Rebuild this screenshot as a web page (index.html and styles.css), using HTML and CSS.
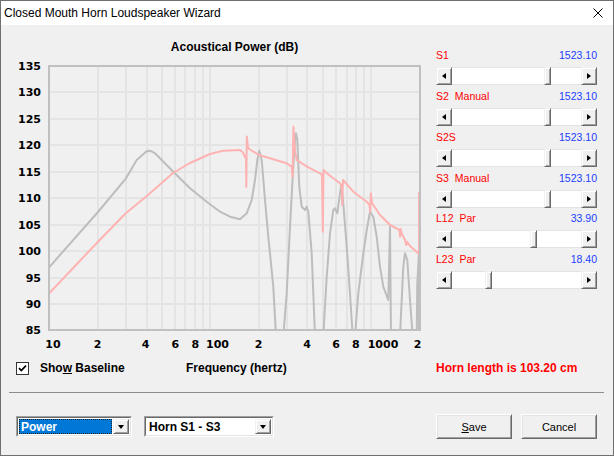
FILE: index.html
```html
<!DOCTYPE html>
<html>
<head>
<meta charset="utf-8">
<title>Closed Mouth Horn Loudspeaker Wizard</title>
<link rel="stylesheet" href="styles.css">
</head>
<body>
<div class="window">
  <div class="titlebar">
    <span class="title">Closed Mouth Horn Loudspeaker Wizard</span>
    <svg class="close" width="10" height="10" viewBox="0 0 10 10"><path d="M0.5 0.5 L9.5 9.5 M9.5 0.5 L0.5 9.5" stroke="#000" stroke-width="1" fill="none"/></svg>
  </div>
  <div class="client">
    <div class="top">
      <svg class="chart" width="429" height="331" viewBox="1 25 429 331">
        <defs><clipPath id="plot"><rect x="49" y="66" width="371" height="264"/></clipPath></defs>
        <text class="ctitle" x="234.5" y="50.5" text-anchor="middle">Acoustical Power (dB)</text>
        <g class="grid">
          <line x1="49" x2="420" y1="92" y2="92"/><line x1="49" x2="420" y1="119" y2="119"/>
          <line x1="49" x2="420" y1="145" y2="145"/><line x1="49" x2="420" y1="172" y2="172"/>
          <line x1="49" x2="420" y1="198" y2="198"/><line x1="49" x2="420" y1="225" y2="225"/>
          <line x1="49" x2="420" y1="251" y2="251"/><line x1="49" x2="420" y1="278" y2="278"/>
          <line x1="49" x2="420" y1="304" y2="304"/>
          <line y1="66" y2="330" x1="98" x2="98"/><line y1="66" y2="330" x1="126" x2="126"/>
          <line y1="66" y2="330" x1="147" x2="147"/><line y1="66" y2="330" x1="162" x2="162"/>
          <line y1="66" y2="330" x1="175" x2="175"/><line y1="66" y2="330" x1="185" x2="185"/>
          <line y1="66" y2="330" x1="195" x2="195"/><line y1="66" y2="330" x1="203" x2="203"/>
          <line y1="66" y2="330" x1="210" x2="210"/><line y1="66" y2="330" x1="259" x2="259"/>
          <line y1="66" y2="330" x1="287" x2="287"/><line y1="66" y2="330" x1="307" x2="307"/>
          <line y1="66" y2="330" x1="323" x2="323"/><line y1="66" y2="330" x1="336" x2="336"/>
          <line y1="66" y2="330" x1="347" x2="347"/><line y1="66" y2="330" x1="356" x2="356"/>
          <line y1="66" y2="330" x1="364" x2="364"/><line y1="66" y2="330" x1="371" x2="371"/>
        </g>
        <g clip-path="url(#plot)">
          <polyline class="base" points="48.5,268 98,212 126,178.3 136.7,160 146,151.7 149,150.7 152,151.5 155,153.3 173.3,171.7 190,188.3 206.7,201.7 220,211.7 230,216.7 240,219.3 246.7,213.3 251.7,200 255,180 257.3,160 259.3,150.7 261.7,160 265,200 268.3,236.7 273.3,286.7 276,336 283.3,336 286.7,293.3 290,226.7 292.7,176.7 295,140 296,133.3 297.3,140 299.3,186.7 301.7,206.7 305,210 306.7,206.7 308.3,211.7 311.7,253.3 315,336 323.3,336 326.7,276.7 330,233.3 333.3,210 335,208.3 337.3,213.3 340,193.3 341.3,185 343.3,203.3 346.7,246.7 350,293.3 352.7,336 355,336 358.3,293.3 363.3,253.3 367.3,226.7 370,211.7 373.3,216.7 376.7,236.7 380,266.7 383.3,286.7 388.3,300 390,226.7 391,336 400,336 403.3,266.7 405,253.3 407.3,260 410,300 412.7,336 416.7,336 417.3,283.3 419,253.3 419,336"/>
          <polyline class="tuned" points="48.5,294 98,241.7 126,213 146,196.7 173,173 190,163 210,154 223,150.7 240,150 243,152.5 245,157 246,158 246.3,187 246.8,136.5 248,147 249,149 259,155 286.7,163.3 291.7,166.7 292.6,176.7 293.4,126.7 294.8,150 296.7,160 307,166.7 320,173.3 322,175 322.8,231.7 323.5,170 325,171.7 333.3,178.3 340,183.3 341.7,186 342.2,205 343,180 344,181 353.3,191.7 366.7,201.7 369.5,205 370.2,211.7 370.8,193.3 372,203 380,215 390,225 399.5,230 400,236.7 400.7,229 401.5,233 405,240 406.2,245 407,241.7 410,246 418.3,253.3 419,253.3 419,191.7"/>
        </g>
        <rect class="frame" x="49" y="66" width="371" height="264"/>
        <g class="ylab">
          <text x="41" y="70">135</text><text x="41" y="96">130</text><text x="41" y="123">125</text>
          <text x="41" y="149">120</text><text x="41" y="176">115</text><text x="41" y="202">110</text>
          <text x="41" y="229">105</text><text x="41" y="255">100</text><text x="41" y="282">95</text>
          <text x="41" y="308">90</text><text x="41" y="334">85</text>
        </g>
        <g class="xlab">
          <text x="53" y="348">10</text><text x="97.7" y="348">2</text><text x="145.5" y="348">4</text>
          <text x="175.3" y="348">6</text><text x="195.3" y="348">8</text><text x="217.5" y="348">100</text>
          <text x="258.7" y="348">2</text><text x="307" y="348">4</text><text x="336" y="348">6</text>
          <text x="355.8" y="348">8</text><text x="383" y="348">1000</text><text x="417.5" y="348">2</text>
        </g>
      </svg>
      <div class="panel">
        <div class="slider">
          <div class="srow"><span class="name">S1</span><span class="val">1523.10</span></div>
          <div class="sb"><div class="arrow l"></div><div class="track" style="width:92px"></div><div class="thumb"></div><div class="track rest"></div><div class="arrow r"></div></div>
        </div>
        <div class="slider">
          <div class="srow"><span class="name">S2</span><span class="mode">Manual</span><span class="val">1523.10</span></div>
          <div class="sb"><div class="arrow l"></div><div class="track" style="width:92px"></div><div class="thumb"></div><div class="track rest"></div><div class="arrow r"></div></div>
        </div>
        <div class="slider">
          <div class="srow"><span class="name">S2S</span><span class="val">1523.10</span></div>
          <div class="sb"><div class="arrow l"></div><div class="track" style="width:92px"></div><div class="thumb"></div><div class="track rest"></div><div class="arrow r"></div></div>
        </div>
        <div class="slider">
          <div class="srow"><span class="name">S3</span><span class="mode">Manual</span><span class="val">1523.10</span></div>
          <div class="sb"><div class="arrow l"></div><div class="track" style="width:92px"></div><div class="thumb"></div><div class="track rest"></div><div class="arrow r"></div></div>
        </div>
        <div class="slider">
          <div class="srow"><span class="name">L12</span><span class="mode">Par</span><span class="val">33.90</span></div>
          <div class="sb"><div class="arrow l"></div><div class="track" style="width:78px"></div><div class="thumb"></div><div class="track rest"></div><div class="arrow r"></div></div>
        </div>
        <div class="slider">
          <div class="srow"><span class="name">L23</span><span class="mode">Par</span><span class="val">18.40</span></div>
          <div class="sb"><div class="arrow l"></div><div class="track" style="width:33px"></div><div class="thumb"></div><div class="track rest"></div><div class="arrow r"></div></div>
        </div>
      </div>
    </div>
    <div class="options">
      <div class="baseline">
        <svg class="cb" width="13" height="13" viewBox="0 0 13 13"><rect x="0.5" y="0.5" width="12" height="12" fill="#fff" stroke="#333"/><path d="M3 6.2 L5.3 8.6 L10 3.6" fill="none" stroke="#000" stroke-width="1.7"/></svg>
        <span>Sho<u>w</u> Baseline</span>
      </div>
      <div class="freq">Frequency (hertz)</div>
      <div class="horn">Horn length is 103.20 cm</div>
    </div>
    <div class="sep"></div>
    <div class="bottom">
      <div class="combo power">
        <div class="combo-in">
          <div class="sel"><span>Power</span></div>
          <div class="dd"></div>
        </div>
      </div>
      <div class="combo horncombo">
        <div class="combo-in">
          <div class="plain">Horn S1 - S3</div>
          <div class="dd"></div>
        </div>
      </div>
      <div class="btn save"><span><u>S</u>ave</span></div>
      <div class="btn cancel"><span>Cancel</span></div>
    </div>
  </div>
</div>
</body>
</html>
```
FILE: styles.css
```css
* { box-sizing: border-box; }
html, body { margin: 0; padding: 0; }
body {
  width: 614px; height: 456px; overflow: hidden;
  background: #f0f0f0;
  font-family: "Liberation Sans", Arial, sans-serif;
}
.window {
  width: 614px; height: 456px;
  border: 1px solid #6f6f6f;
  display: flex; flex-direction: column;
  background: #f0f0f0;
}
.titlebar {
  flex: none; height: 24px; background: #fff;
  display: flex; align-items: center; justify-content: space-between;
  padding: 0 10px 0 3px;
}
.title { font-size: 12px; color: #000; }
.close { display: block; }
.client { flex: 1; display: flex; flex-direction: column; }
.top { flex: none; height: 331px; display: flex; }
.chart { display: block; flex: none; }
.ctitle { font-family: "Liberation Sans", Arial, sans-serif; font-weight: bold; font-size: 12px; fill: #000; }
.grid line { stroke: #e4e4e4; stroke-width: 2; }
.frame { fill: none; stroke: #c0c0c0; stroke-width: 2; }
.base { fill: none; stroke: #bdbdbd; stroke-width: 2; stroke-linejoin: round; }
.tuned { fill: none; stroke: #ffb2b2; stroke-width: 2; stroke-linejoin: round; }
.ylab text { font-family: "DejaVu Sans", sans-serif; font-weight: bold; font-size: 11px; fill: #000; text-anchor: end; }
.xlab text { font-family: "DejaVu Sans", sans-serif; font-weight: bold; font-size: 11px; fill: #000; text-anchor: middle; }

.panel { flex: none; width: 161px; margin-left: 6px; padding-top: 24px; }
.slider { margin-bottom: 4.85px; }
.srow { display: flex; height: 13px; line-height: 13px; font-size: 10.5px; margin-bottom: 5px; white-space: nowrap; }
.name, .mode { color: #ff0000; }
.mode { margin-left: 6px; }
.val { margin-left: auto; color: #2040ff; }
.sb { display: flex; height: 18px; background: #fff; }
.track { flex: none; height: 18px; border-top: 1px solid #e3e3e3; border-bottom: 1px solid #e3e3e3; background: #fff; }
.track.rest { flex: 1; }
.arrow, .thumb {
  flex: none; height: 18px; background: #f0f0f0;
  border: 1px solid; border-color: #f0f0f0 #696969 #696969 #f0f0f0;
  box-shadow: inset 1px 1px #fff, inset -1px -1px #a0a0a0;
  display: flex; align-items: center; justify-content: center;
}
.arrow { width: 16px; }
.thumb { width: 7px; }
.arrow::before { content: ""; display: block; border-style: solid; }
.arrow.l::before { border-width: 3.5px 4px 3.5px 0; border-color: transparent #000 transparent transparent; }
.arrow.r::before { border-width: 3.5px 0 3.5px 4px; border-color: transparent transparent transparent #000; }

.options {
  flex: none; display: flex; align-items: center;
  height: 16px; margin-top: 4px;
  font-size: 12px; font-weight: bold; line-height: 16px; color: #000;
  white-space: nowrap;
}
.baseline { width: 185px; padding-left: 15px; display: flex; align-items: center; }
.cb { display: block; margin-right: 11px; flex: none; }
.freq { width: 250px; }
.horn { color: #ff0000; }

.sep { flex: none; height: 1px; background: #8c8c8c; margin: 16px 9px 0 8px; }

.bottom { flex: none; display: flex; align-items: flex-start; margin-top: 21px; padding: 0 16px 0 15px; }
.combo {
  margin-top: 2px; height: 21px;
  border: 1px solid; border-color: #a0a0a0 #fff #fff #a0a0a0;
}
.combo-in {
  height: 100%; display: flex; background: #fff; padding: 1px;
  border: 1px solid; border-color: #696969 #e3e3e3 #e3e3e3 #696969;
  font-size: 12px; font-weight: bold;
}
.power { width: 116px; }
.horncombo { width: 130px; margin-left: 12px; }
.sel {
  flex: 1; margin-right: 1px; background: #0078d7; color: #fff;
  border: 1px dotted #222; display: flex; align-items: center; padding-left: 1px;
}
.plain { flex: 1; display: flex; align-items: center; padding-left: 2px; color: #000; }
.dd {
  flex: none; width: 16px; height: 100%; background: #f0f0f0;
  border: 1px solid; border-color: #f0f0f0 #696969 #696969 #f0f0f0;
  box-shadow: inset 1px 1px #fff, inset -1px -1px #a0a0a0;
  display: flex; align-items: center; justify-content: center;
}
.dd::before { content: ""; display: block; border-style: solid; border-width: 4px 3.5px 0 3.5px; border-color: #000 transparent transparent transparent; }
.btn {
  width: 76px; height: 25px; background: #f0f0f0;
  border: 1px solid; border-color: #fff #696969 #696969 #fff;
  box-shadow: inset 1px 1px #e3e3e3, inset -1px -1px #a0a0a0;
  display: flex; align-items: center; justify-content: center;
  font-size: 11px; color: #000;
}
.save { margin-left: auto; }
.cancel { margin-left: 9px; }
```
